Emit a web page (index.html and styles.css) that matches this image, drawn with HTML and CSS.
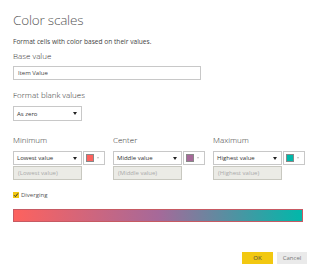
FILE: index.html
```html
<!DOCTYPE html>
<html lang="en">
<head>
  <meta charset="UTF-8">
  <title>Color scales</title>
  <link rel="stylesheet" href="styles.css">
</head>
<body>
<div class="dialog">
  <h1 class="title">Color scales</h1>
  <p class="intro">Format cells with color based on their values.</p>

  <!-- Base value -->
  <div class="label base-label">Base value</div>
  <div class="textbox wide">Item Value</div>

  <!-- Blank values -->
  <div class="label blank-label">Format blank values</div>
  <div class="select blank-select"><span>As zero</span><span class="caret"></span></div>

  <!-- Min / center / max -->
  <div class="scales">
    <div class="scale">
      <div class="label">Minimum</div>
      <div class="row">
        <div class="select"><span>Lowest value</span><span class="caret"></span></div>
        <div class="swatch"><span class="chip chip-min"></span><span class="mini-caret"></span></div>
      </div>
      <div class="textbox disabled">(Lowest value)</div>
    </div>
    <div class="scale">
      <div class="label">Center</div>
      <div class="row">
        <div class="select"><span>Middle value</span><span class="caret"></span></div>
        <div class="swatch"><span class="chip chip-mid"></span><span class="mini-caret"></span></div>
      </div>
      <div class="textbox disabled">(Middle value)</div>
    </div>
    <div class="scale">
      <div class="label">Maximum</div>
      <div class="row">
        <div class="select"><span>Highest value</span><span class="caret"></span></div>
        <div class="swatch"><span class="chip chip-max"></span><span class="mini-caret"></span></div>
      </div>
      <div class="textbox disabled">(Highest value)</div>
    </div>
  </div>

  <label class="check">
    <span class="box">
      <svg width="6" height="6" viewBox="0 0 6 6"><path d="M1 3.2 L2.4 4.6 L5 1.4" fill="none" stroke="#333" stroke-width="1"/></svg>
    </span>
    Diverging
  </label>

  <div class="gradient"></div>

  <div class="actions">
    <button class="btn btn-ok">OK</button>
    <button class="btn btn-cancel">Cancel</button>
  </div>
</div>
</body>
</html>
```

FILE: styles.css
```css
/* Dialog base */
body {
  margin: 0;
  background: #fff;
  font-family: "Open Sans", "Noto Sans", sans-serif;
  color: #333;
}
.dialog {
  width: 320px;
  height: 278px;
  padding: 0 0 0 13px;
  box-sizing: border-box;
}
.title {
  margin: 0;
  padding-top: 11px;
  font-size: 13.5px;
  line-height: 18px;
  font-weight: 300;
  letter-spacing: -0.2px;
  color: #555;
}
.intro {
  margin: 8px 0 0;
  font-size: 6.6px;
  line-height: 10px;
  color: #444;
}
.label {
  font-size: 8px;
  line-height: 12px;
  font-weight: 300;
  color: #333;
}
.base-label {
  margin-top: 3px;
}
.textbox {
  height: 14px;
  box-sizing: border-box;
  border: 1px solid #c8c8c8;
  font-size: 6px;
  line-height: 12px;
  padding-left: 4px;
  color: #444;
}
.textbox.wide {
  width: 188px;
  margin-top: 4px;
}
.blank-label {
  margin-top: 9px;
}
.select {
  width: 69px;
  height: 14px;
  box-sizing: border-box;
  border: 1px solid #c8c8c8;
  display: flex;
  align-items: center;
  justify-content: space-between;
  padding: 0 4px 0 3px;
  font-size: 6px;
  color: #333;
}
.blank-select {
  margin-top: 5px;
  height: 15px;
}
.caret {
  width: 0;
  height: 0;
  border-left: 2px solid transparent;
  border-right: 2px solid transparent;
  border-top: 3px solid #222;
}
/* Scale columns */
.scales {
  display: flex;
  gap: 8px;
  margin-top: 13px;
}
.scale {
  width: 92px;
}
.scale .label {
  margin-bottom: 5px;
}
.row {
  display: flex;
  gap: 1px;
}
.swatch {
  width: 22px;
  height: 14px;
  box-sizing: border-box;
  border: 1px solid #c8c8c8;
  display: flex;
  align-items: center;
  padding-left: 2px;
  gap: 3px;
}
.chip {
  width: 8px;
  height: 8px;
  border: 1px solid #888;
  box-sizing: border-box;
}
.chip-min { background: #fd625e; }
.chip-mid { background: #a66999; }
.chip-max { background: #01b8aa; }
.mini-caret {
  width: 0;
  height: 0;
  border-left: 1.5px solid transparent;
  border-right: 1.5px solid transparent;
  border-top: 2px solid #bbb;
}
.textbox.disabled {
  width: 69px;
  margin-top: 1px;
  background: #ebebe6;
  border-color: #c8c8c0;
  color: #aaa;
}
/* Diverging */
.check {
  display: flex;
  align-items: center;
  gap: 2px;
  margin-top: 10px;
  font-size: 6px;
  line-height: 10px;
  color: #555;
}
.box {
  width: 6px;
  height: 6px;
  background: #f2c811;
  display: flex;
}
.gradient {
  margin-top: 9px;
  width: 290px;
  height: 13px;
  box-sizing: border-box;
  border: 1px solid #c75a63;
  background: linear-gradient(to right, #fd625e, #a66999, #01b8aa);
}
.actions {
  display: flex;
  justify-content: flex-end;
  gap: 4px;
  margin-top: 30px;
  padding-right: 13px;
}
.btn {
  height: 12px;
  border: none;
  padding: 0;
  font-family: inherit;
  font-size: 6px;
  color: #444;
}
.btn-ok {
  width: 31px;
  background: #f2c811;
}
.btn-cancel {
  width: 30px;
  background: #eaeaea;
  color: #777;
}
```
